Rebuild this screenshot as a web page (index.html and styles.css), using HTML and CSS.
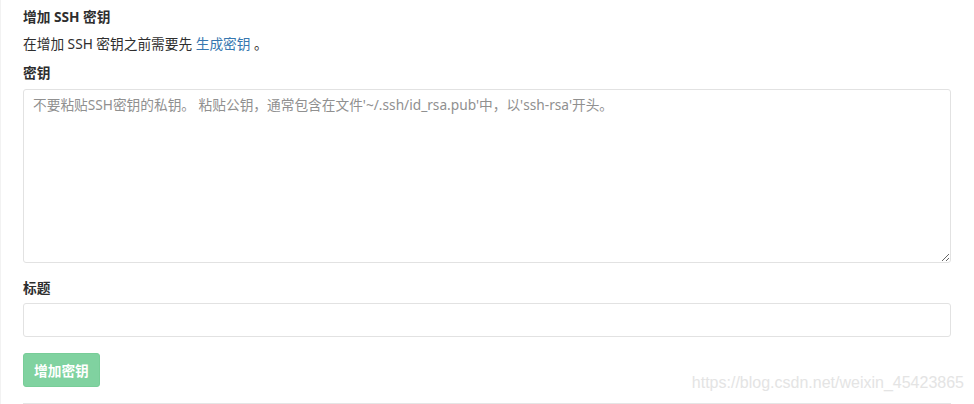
FILE: index.html
```html
<!DOCTYPE html>
<html lang="zh">
<head>
<meta charset="utf-8">
<title>增加 SSH 密钥</title>
<link rel="stylesheet" href="styles.css">
</head>
<body>
<div class="page">
  <h4 class="title">增加 SSH 密钥</h4>
  <p class="hint">在增加 SSH 密钥之前需要先 <a href="#" class="link">生成密钥</a> 。</p>
  <label class="label label-key" for="key">密钥</label>
  <textarea id="key" class="field textarea" placeholder="不要粘贴SSH密钥的私钥。 粘贴公钥，通常包含在文件'~/.ssh/id_rsa.pub'中，以'ssh-rsa'开头。"></textarea>
  <label class="label label-title" for="ttl">标题</label>
  <input id="ttl" class="field input" type="text">
  <div class="actions">
    <button class="btn" disabled>增加密钥</button>
  </div>
  <hr class="rule">
  <div class="watermark">https://blog.csdn.net/weixin_45423865</div>
</div>
</body>
</html>
```

FILE: styles.css
```css
html, body {
  margin: 0;
  padding: 0;
  background: #fff;
}
body {
  font-family: "Noto Sans", "Noto Sans CJK SC", sans-serif;
  font-size: 13.7px;
  color: #2e2e2e;
  border-left: 1px solid #f2f2f2;
  min-height: 404px;
  box-sizing: border-box;
}
.page {
  position: relative;
  padding: 0 23px 0 22px;
  display: flex;
  flex-direction: column;
}
.title {
  margin: 7px 0 0;
  font-size: 13.7px;
  line-height: 20px;
  font-weight: 700;
  color: #2e2e2e;
}
.hint {
  margin: 7px 0 0;
  line-height: 20px;
}
.link {
  color: #3777b0;
  text-decoration: none;
}
.label {
  display: block;
  font-weight: 700;
  line-height: 20px;
}
.label-key { margin-top: 9px; }
.label-title { margin-top: 15px; }
.field {
  box-sizing: border-box;
  width: 100%;
  border: 1px solid #e2e2e2;
  border-radius: 3px;
  font-family: inherit;
  font-size: 13.7px;
  color: #2e2e2e;
  background: #fff;
  outline: none;
}
.textarea {
  margin-top: 6px;
  height: 174px;
  padding: 5px 9px;
  line-height: 20px;
  resize: vertical;
}
.textarea::placeholder { color: #909090; }
.input {
  margin-top: 5px;
  height: 34px;
  padding: 0 9px;
}
.actions {
  margin-top: 16px;
  display: flex;
}
.btn {
  height: 34px;
  padding: 0 10px;
  border: 1px solid #78cd98;
  border-radius: 3px;
  background: #80d2a0;
  color: #fff;
  font-family: inherit;
  font-size: 13.7px;
  font-weight: 700;
}
.rule {
  margin: 16px 0 0;
  border: 0;
  border-top: 1px solid #e5e5e5;
}
.watermark {
  position: absolute;
  right: 10px;
  top: 374px;
  font-family: "Liberation Sans", Arial, sans-serif;
  font-size: 16px;
  color: #e4e4e4;
}
```
